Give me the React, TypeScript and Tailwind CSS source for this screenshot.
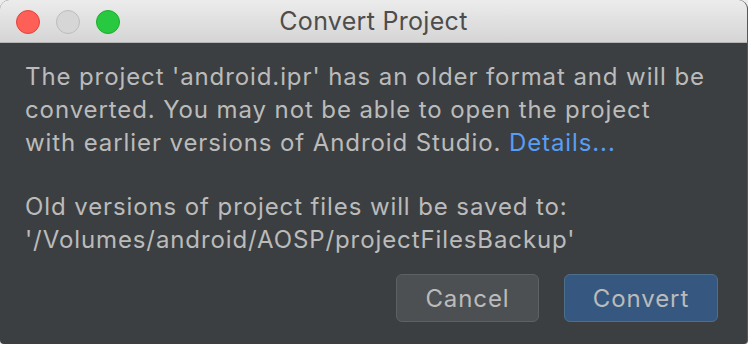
const App = () => {
  return (
    <div className="w-[748px] h-[344px] bg-[#ececec] font-['Inter',sans-serif]">
      <div className="w-full h-full flex flex-col rounded-t-[9px] rounded-b-[4px] overflow-hidden bg-[#3c3f41] border-r border-[#55585a]">
        {/* title bar */}
        <div className="relative h-[43px] shrink-0 flex items-center justify-center bg-gradient-to-b from-[#ececec] to-[#d5d5d5] border-b border-[#b5b5b5]">
          <div className="absolute left-[16px] top-[10px] flex gap-[16px]">
            <span className="w-[24px] h-[24px] rounded-full bg-[#fe5f57] border border-[#e0443e]" />
            <span className="w-[24px] h-[24px] rounded-full bg-[#d6d6d6] border border-[#bdbdbd]" />
            <span className="w-[24px] h-[24px] rounded-full bg-[#28c840] border border-[#1dad2b]" />
          </div>
          <span className="text-[25px] text-[#4d4d4d] leading-none tracking-[0.3px]">Convert Project</span>
        </div>

        {/* body */}
        <div className="flex-1 flex flex-col pl-[25px] pt-[17px] text-[24px] leading-[33px] tracking-[0.9px] text-[#bbbbbb]">
          <p>
            The project 'android.ipr' has an older format and will be
            <br />
            converted. You may not be able to open the project
            <br />
            with earlier versions of Android Studio.{" "}
            <span className="text-[#589df6]">Details...</span>
          </p>
          <p className="mt-[31px]">
            Old versions of project files will be saved to:
            <br />
            '/Volumes/android/AOSP/projectFilesBackup'
          </p>
          <div className="flex justify-end gap-[25px] pr-[29px] mt-[18px]">
            <button className="w-[143px] h-[48px] rounded-[6px] bg-[#4c5052] border border-[#5e6162] text-[#bbbbbb] text-[24px] tracking-[0.9px]">
              Cancel
            </button>
            <button className="w-[154px] h-[48px] rounded-[6px] bg-[#365880] border border-[#4c708c] text-[#bbbbbb] text-[24px] tracking-[0.9px]">
              Convert
            </button>
          </div>
        </div>
      </div>
    </div>
  );
};

export default App;
